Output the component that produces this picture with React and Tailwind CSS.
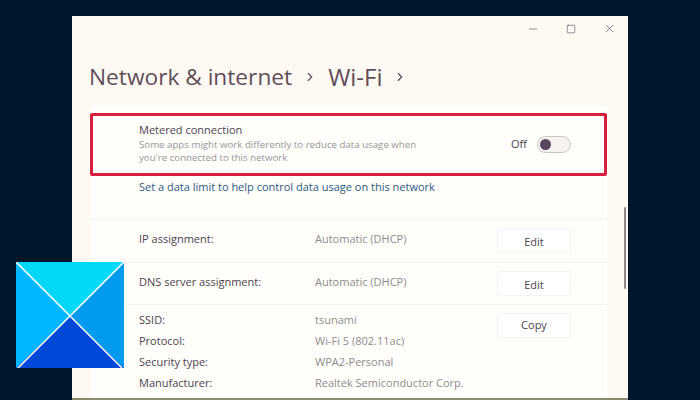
import { Minus, Square, X, ChevronRight } from "lucide-react";

const font = { fontFamily: '"Open Sans", "Noto Sans", sans-serif' };

function Row({ label, value, action }) {
  return (
    <div className="flex h-[42.5px] items-center border-t border-[#f5f3f0] pl-[49px] pr-[36px]">
      <span className="w-[176px] pb-[3px] text-[11px] text-[#4b4450]">{label}</span>
      <span className="w-[182px] pb-[3px] text-[11px] text-[#8f8c8c]">{value}</span>
      <button className="flex h-[25px] w-[74px] items-center justify-center rounded-[3px] border border-[#f4f3f2] bg-white pt-[3px] text-[11px] text-[#4a4450]">
        {action}
      </button>
    </div>
  );
}

function InfoLine({ label, value }) {
  return (
    <div className="flex h-[21px] items-center">
      <span className="w-[176px] text-[11px] text-[#4b4450]">{label}</span>
      <span className="text-[11px] text-[#8f8c8c]">{value}</span>
    </div>
  );
}

function WindowsLogo() {
  return (
    <svg viewBox="0 0 108 106" className="absolute left-[16px] top-[262px] h-[106px] w-[108px]">
      <rect width="108" height="106" fill="#00b7ff" />
      <polygon points="0,0 108,0 54,54" fill="#00d8f8" />
      <polygon points="108,0 108,106 54,54" fill="#009bee" />
      <polygon points="0,106 108,106 54,54" fill="#0048d8" />
      <path d="M0 0L106 106M108 0L2 106" stroke="#fff" strokeWidth="1.5" />
    </svg>
  );
}

export default function App() {
  return (
    <div className="relative h-[400px] w-[700px] overflow-hidden bg-[#01162b] pl-[72px] pt-[16px]" style={font}>
      <div className="flex h-[384px] w-[556px] flex-col overflow-hidden border-b-2 border-[#8a8a70] bg-[#fff9f3]">
        <div className="flex h-[25px] shrink-0 items-center justify-end gap-[27px] pr-[12px] text-[#4a4450]">
          <Minus size={12} strokeWidth={1.2} />
          <Square size={10} strokeWidth={1.4} />
          <X size={13} strokeWidth={1.2} />
        </div>
        <div className="flex h-[64px] shrink-0 items-center pl-[17px] pt-[8px] font-medium text-[#5e4e58]">
          <span className="text-[22.7px]">Network &amp; internet</span>
          <ChevronRight size={14} strokeWidth={2} className="mx-[11px]" />
          <span className="text-[24px]">Wi-Fi</span>
          <ChevronRight size={14} strokeWidth={2} className="ml-[10px]" />
        </div>
        <div className="ml-[18px] w-[517px] flex-1 bg-[#fffefb] pt-[8px]">
          <div className="flex h-[63px] items-center rounded-[2px] border-[3px] border-[#d7203f] pl-[46px] pr-[33px]">
            <div className="mb-[3px] flex-1">
              <p className="mb-[1px] text-[11px] leading-[14px] text-[#4b4450]">Metered connection</p>
              <p className="w-[290px] text-[9.7px] leading-[13px] text-[#99959a]">
                Some apps might work differently to reduce data usage when you're connected to this network
              </p>
            </div>
            <span className="mr-[10px] text-[11px] text-[#4b4450]">Off</span>
            <div className="flex h-[17px] w-[34px] items-center rounded-full border border-[#c9c6c6] bg-[#f6f3f0] pl-[2px]">
              <div className="h-[11px] w-[11px] rounded-full bg-[#5a4560]" />
            </div>
          </div>
          <p className="mt-[3px] pl-[49px] text-[11px] leading-[15px] text-[#2d5a82]">
            Set a data limit to help control data usage on this network
          </p>
          <div className="mt-[25px]">
            <Row label="IP assignment:" value="Automatic (DHCP)" action="Edit" />
            <Row label="DNS server assignment:" value="Automatic (DHCP)" action="Edit" />
            <div className="flex border-t border-[#f5f3f0] pl-[49px] pr-[36px] pt-[5px]">
              <div className="w-[358px]">
                <InfoLine label="SSID:" value="tsunami" />
                <InfoLine label="Protocol:" value="Wi-Fi 5 (802.11ac)" />
                <InfoLine label="Security type:" value="WPA2-Personal" />
                <InfoLine label="Manufacturer:" value="Realtek Semiconductor Corp." />
              </div>
              <button className="mt-[3px] flex h-[25px] w-[74px] items-center justify-center rounded-[3px] border border-[#f4f3f2] bg-white text-[11px] text-[#4a4450]">
                Copy
              </button>
            </div>
          </div>
        </div>
      </div>
      <div className="absolute left-[624px] top-[207px] h-[82px] w-[2px] rounded-full bg-[#8d8a88]" />
      <WindowsLogo />
    </div>
  );
}
